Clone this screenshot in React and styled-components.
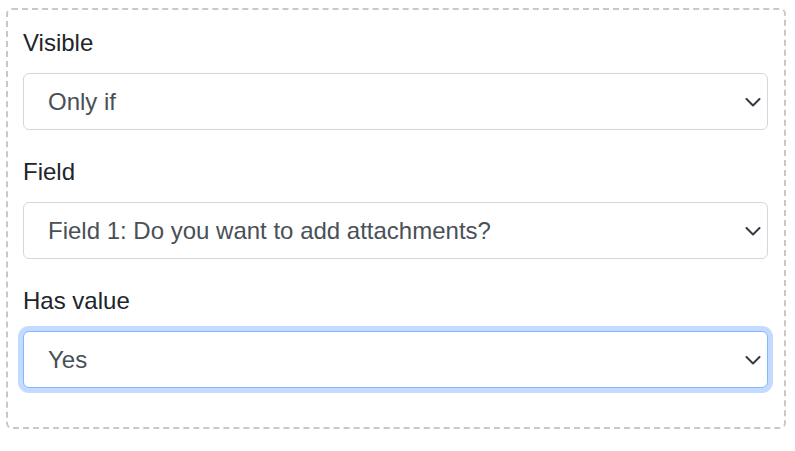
import React from "react";
import styled, { createGlobalStyle } from "styled-components";

const GlobalStyle = createGlobalStyle`
  body {
    margin: 0;
    background: #fff;
    font-family: "Liberation Sans", Arial, sans-serif;
  }
`;

const Page = styled.div`
  padding: 8px 9px 6px 6px;
`;

const Panel = styled.div`
  width: 780px;
  box-sizing: border-box;
  border: 2px dashed #c8c8c8;
  border-radius: 6px;
  padding: 15px 16px 15px 15px;
`;

const Group = styled.div`
  margin-bottom: 24px;
`;

const Label = styled.label`
  display: block;
  font-size: 24px;
  line-height: 36px;
  color: #212529;
  margin-bottom: 12px;
`;

const SelectWrap = styled.div`
  position: relative;
`;

const Select = styled.select`
  appearance: none;
  -webkit-appearance: none;
  display: block;
  width: 100%;
  height: 57px;
  box-sizing: border-box;
  padding: 9px 54px 9px 24px;
  font-family: "Liberation Sans", Arial, sans-serif;
  font-size: 24px;
  line-height: 36px;
  color: #495057;
  background: #fff;
  border: 1px solid ${(p) => (p.$focused ? "#86b7fe" : "#d3d7db")};
  border-radius: 6px;
  outline: none;
  box-shadow: ${(p) =>
    p.$focused ? "0 0 0 5px rgba(13, 110, 253, 0.25)" : "none"};
`;

const Chevron = styled.svg`
  position: absolute;
  right: 7px;
  top: 50%;
  margin-top: -4px;
  pointer-events: none;
`;

function Field({ label, value, focused }) {
  return (
    <Group>
      <Label>{label}</Label>
      <SelectWrap>
        <Select $focused={focused} defaultValue={value}>
          <option>{value}</option>
        </Select>
        <Chevron width="16" height="9" viewBox="0 0 16 9">
          <polyline
            points="1.5,1 8,7.5 14.5,1"
            fill="none"
            stroke="#343a40"
            strokeWidth="2"
            strokeLinecap="round"
            strokeLinejoin="round"
          />
        </Chevron>
      </SelectWrap>
    </Group>
  );
}

export default function App() {
  return (
    <Page>
      <GlobalStyle />
      <Panel>
        <Field label="Visible" value="Only if" />
        <Field label="Field" value="Field 1: Do you want to add attachments?" />
        <Field label="Has value" value="Yes" focused />
      </Panel>
    </Page>
  );
}
